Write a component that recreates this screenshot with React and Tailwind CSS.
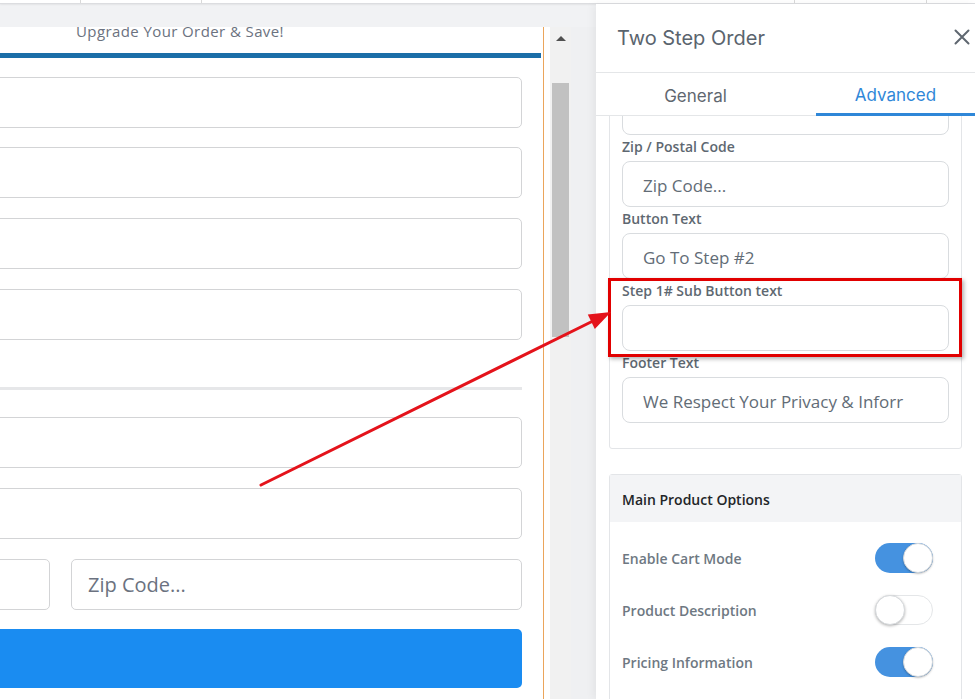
import React from "react";

function LeftInput({ children, className = "" }) {
  return (
    <div className={`h-[51px] bg-white border border-[#d3d4d6] rounded-[5px] flex items-center ${className}`}>
      {children}
    </div>
  );
}

function Field({ label, value }) {
  return (
    <>
      <div className="mt-[2px] mb-[4px] h-[20px] leading-[20px] text-[14px] font-semibold text-[#5e6871]">{label}</div>
      <div className="h-[46px] border border-[#d9dcdf] rounded-[8px] pl-[20px] pt-[3px] flex items-center text-[17px] text-[#626c76] overflow-hidden whitespace-nowrap">
        {value}
      </div>
    </>
  );
}

function Toggle({ on }) {
  return on ? (
    <div className="w-[58px] h-[30px] rounded-full bg-[#4592e0] flex justify-end">
      <div className="w-[30px] h-[30px] rounded-full bg-white border border-[#d6d9dc] shadow-[0_1px_2px_rgba(0,0,0,0.25)]" />
    </div>
  ) : (
    <div className="w-[58px] h-[30px] rounded-full bg-white border border-[#e4e6e8] flex justify-start">
      <div className="w-[30px] h-[30px] -mt-px -ml-px rounded-full bg-white border border-[#d6d9dc] shadow-[0_1px_3px_rgba(0,0,0,0.3)]" />
    </div>
  );
}

export default function App() {
  return (
    <div
      className="relative w-[975px] h-[699px] overflow-hidden bg-[#f1f2f4] flex flex-col"
      style={{ fontFamily: '"Open Sans", "Liberation Sans", sans-serif' }}
    >
      {/* top strip */}
      <div className="h-[4px] shrink-0 bg-white border-b border-[#dcdde0] flex shadow-[0_1px_2px_rgba(0,0,0,0.06)]">
        <div className="w-[81px] border-r border-[#d9d9d9]" />
        <div className="w-[121px] border-r border-[#d9d9d9]" />
        <div className="w-[593px] border-r border-[#d9d9d9]" />
        <div className="w-[132px] border-r border-[#d9d9d9]" />
        <div className="flex-1" />
      </div>

      <div className="flex flex-1 min-h-0">
        {/* left workspace */}
        <div className="w-[596px] shrink-0 flex flex-col pt-[23px]">
          <div className="flex flex-1 min-h-0">
            <div className="w-[544px] shrink-0 bg-white border-r border-[#eba55b] overflow-hidden">
              <div className="-mt-[6px] pl-[76px] h-[20px] leading-[20px] text-[15px] tracking-[0.4px] text-[#6b7280] whitespace-nowrap">
                Upgrade Your Order &amp; Save!
              </div>
              <div className="mt-[12px] h-[5px] w-[541px] bg-[#1b6ea8]" />
              <div className="-ml-[100px] w-[622px] mt-[19px] flex flex-col">
                <LeftInput />
                <LeftInput className="mt-[19px]" />
                <LeftInput className="mt-[20px]" />
                <LeftInput className="mt-[20px]" />
                <div className="mt-[47px] h-[3px] bg-[#e6e7e9]" />
                <LeftInput className="mt-[27px]" />
                <LeftInput className="mt-[20px]" />
                <div className="mt-[20px] flex gap-[21px]">
                  <LeftInput className="flex-1" />
                  <LeftInput className="w-[451px] pl-[16px] text-[20px] text-[#6b7280]">Zip Code...</LeftInput>
                </div>
                <div className="mt-[19px] h-[59px] rounded-[5px] bg-[#1a8cf1]" />
              </div>
            </div>
            <div className="w-[6px] shrink-0 bg-white" />
            <div className="w-[21px] shrink-0 bg-[#f1f1f1] flex flex-col items-center pt-[9px]">
              <div className="w-0 h-0 border-l-[5px] border-r-[5px] border-b-[5px] border-l-transparent border-r-transparent border-b-[#505050]" />
              <div className="mt-[42px] w-[17px] h-[254px] bg-[#c1c1c1]" />
            </div>
            <div className="flex-1 bg-[#eff0f2]" />
          </div>
        </div>

        {/* right panel */}
        <div className="flex-1 bg-white flex flex-col shadow-[-3px_0_8px_rgba(0,0,0,0.05)] min-w-0">
          <div className="h-[69px] shrink-0 border-b border-[#e4e6e8] flex items-center justify-between pl-[21px] pr-[5px]">
            <span className="text-[20px] text-[#5a646e]" style={{ fontFamily: 'Inter, "Open Sans", sans-serif' }}>
              Two Step Order
            </span>
            <svg width="16" height="16" viewBox="0 0 16 16" className="mb-[2px]">
              <path d="M1.5 1.5 L14.5 14.5 M14.5 1.5 L1.5 14.5" stroke="#5f6770" strokeWidth="2" strokeLinecap="round" />
            </svg>
          </div>
          <div
            className="h-[43px] shrink-0 border-b border-[#e4e6e8] flex justify-between pl-[20px] text-[17px]"
            style={{ fontFamily: 'Inter, "Open Sans", sans-serif' }}
          >
            <div className="w-[159px] flex items-center justify-center text-[#5f6770] pt-[6px]">General</div>
            <div className="w-[159px] flex items-center justify-center text-[#2f87d8] border-b-[3px] border-[#2f87d8] -mb-[1px] pt-[6px]">
              Advanced
            </div>
          </div>

          <div className="flex-1 min-h-0 overflow-hidden px-[13px]">
            <div className="-mt-[40px] border border-[#e3e5e8] rounded-[3px] px-[12px] pt-[12px] pb-[25px]">
              <div className="h-[46px] border border-[#d9dcdf] rounded-[8px]" />
              <Field label="Zip / Postal Code" value="Zip Code..." />
              <Field label="Button Text" value="Go To Step #2" />
              <Field label="Step 1# Sub Button text" value="" />
              <Field label="Footer Text" value="We Respect Your Privacy & Inforr" />
            </div>

            <div className="mt-[25px] border border-[#e3e5e8] rounded-[3px]">
              <div className="h-[47px] bg-[#f3f4f6] px-[12px] pt-[2px] flex items-center text-[14px] font-semibold text-[#222528]">
                Main Product Options
              </div>
              <div className="pt-[10px] pb-[20px]">
                {[
                  ["Enable Cart Mode", true],
                  ["Product Description", false],
                  ["Pricing Information", true],
                ].map(([label, on]) => (
                  <div key={label} className="h-[52px] flex items-center justify-between pl-[12px] pr-[28px]">
                    <span className="text-[14px] font-semibold text-[#6e7882]">{label}</span>
                    <Toggle on={on} />
                  </div>
                ))}
              </div>
            </div>
          </div>
        </div>
      </div>

      {/* red highlight box */}
      <div className="absolute left-[608px] top-[278px] w-[354px] h-[79px] border-[3px] border-[#e10000] shadow-[2px_2px_4px_rgba(0,0,0,0.3)] pointer-events-none" />

      {/* arrow */}
      <svg className="absolute left-0 top-0 pointer-events-none" width="975" height="699" viewBox="0 0 975 699">
        <line x1="261" y1="485" x2="593" y2="321" stroke="#e4131b" strokeWidth="3" strokeLinecap="round" />
        <polygon points="611,312 594.8,328.9 587.8,314.6" fill="#e4131b" />
      </svg>
    </div>
  );
}
